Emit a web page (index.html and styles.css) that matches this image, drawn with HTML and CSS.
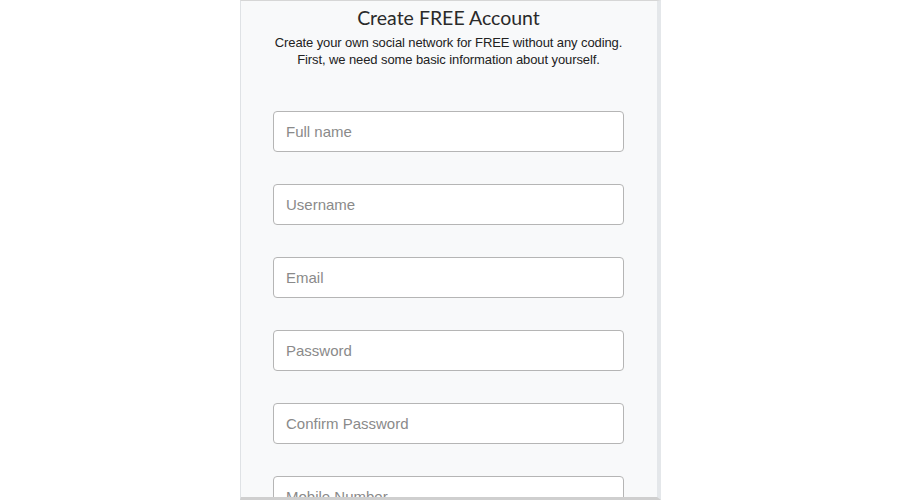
FILE: index.html
```html
<!DOCTYPE html>
<html>
<head>
<meta charset="utf-8">
<link rel="stylesheet" href="styles.css">
</head>
<body>
<div class="page">
  <div class="panel">
    <h1 class="title">Create FREE Account</h1>
    <p class="subtitle">Create your own social network for FREE without any coding.<br>First, we need some basic information about yourself.</p>
    <form class="form">
      <input class="field" type="text" placeholder="Full name">
      <input class="field" type="text" placeholder="Username">
      <input class="field" type="email" placeholder="Email">
      <input class="field" type="password" placeholder="Password">
      <input class="field" type="password" placeholder="Confirm Password">
      <input class="field" type="text" placeholder="Mobile Number">
    </form>
  </div>
</div>
</body>
</html>
```
FILE: styles.css
```css
html, body {
  margin: 0;
  padding: 0;
  background: #ffffff;
  height: 100%;
  overflow: hidden;
}
.page {
  display: flex;
  justify-content: center;
}
.panel {
  width: 421px;
  height: 500px;
  box-sizing: border-box;
  background: #f8f9fa;
  border-left: 1px solid #dfe2e5;
  border-right: 4px solid #e4e7ea;
  border-top: 1px solid #d6d6d6;
  border-bottom: 3px solid #cfcfcf;
  overflow: hidden;
  display: flex;
  flex-direction: column;
  align-items: center;
  font-family: "Liberation Sans", Arial, sans-serif;
}
.title {
  margin: 3px 0 0;
  font-family: "Lato", "Open Sans", sans-serif;
  font-weight: 400;
  font-size: 19.5px;
  line-height: 28px;
  color: #2a2a2a;
}
.subtitle {
  margin: 2px 0 0;
  font-size: 13px;
  letter-spacing: -0.1px;
  line-height: 17px;
  color: #222;
  text-align: center;
}
.form {
  margin-top: 43px;
  display: flex;
  flex-direction: column;
  gap: 32px;
}
.field {
  width: 351px;
  height: 41px;
  box-sizing: border-box;
  border: 1px solid #b5b5b5;
  border-radius: 4px;
  background: #fff;
  padding: 0 12px;
  font-family: "Liberation Sans", Arial, sans-serif;
  font-size: 15px;
  color: #333;
  outline: none;
}
.field::placeholder {
  color: #8a8a8a;
}
```
